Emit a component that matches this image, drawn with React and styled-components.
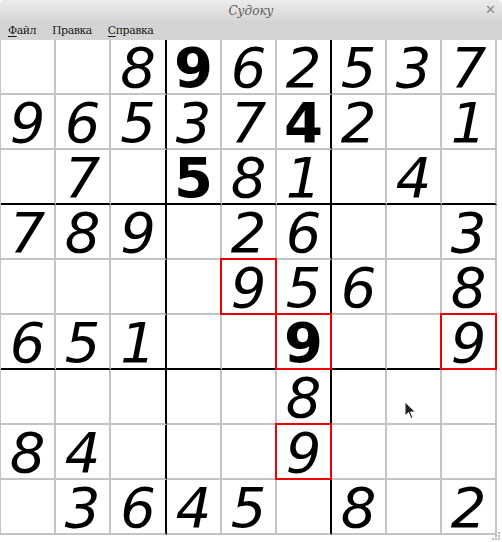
import React from "react"
import styled, { createGlobalStyle } from "styled-components"

const board = [
  ["", "", "8", "9!", "6", "2", "5", "3", "7"],
  ["9", "6", "5", "3", "7", "4!", "2", "", "1"],
  ["", "7", "", "5!", "8", "1", "", "4", ""],
  ["7", "8", "9", "", "2", "6", "", "", "3"],
  ["", "", "", "", "9", "5", "6", "", "8"],
  ["6", "5", "1", "", "", "9!", "", "", "9"],
  ["", "", "", "", "", "8", "", "", ""],
  ["8", "4", "", "", "", "9", "", "", ""],
  ["", "3", "6", "4", "5", "", "8", "", "2"],
]

const conflicts = ["4-4", "5-5", "5-8", "7-5"]

const Global = createGlobalStyle`
  html, body { margin: 0; padding: 0; background: #ffffff; }
  body { width: 502px; height: 542px; overflow: hidden; }
`

const Window = styled.div`
  width: 502px;
  height: 542px;
  display: flex;
  flex-direction: column;
  background: #ffffff;
  position: relative;
`

const TitleBar = styled.div`
  height: 21px;
  display: flex;
  align-items: center;
  justify-content: center;
  position: relative;
  background: linear-gradient(#ececec, #d6d6d6);
  border-top-left-radius: 4px;
  border-top-right-radius: 4px;
  font-family: "DejaVu Serif", "Liberation Serif", serif;
  font-style: italic;
  font-size: 12px;
  color: #5a5a5a;
`

const Close = styled.span`
  position: absolute;
  right: 6px;
  top: 2px;
  font-family: "DejaVu Sans", sans-serif;
  font-style: normal;
  font-weight: bold;
  font-size: 13px;
  color: #8a8a8a;
`

const MenuBar = styled.div`
  height: 19px;
  display: flex;
  align-items: center;
  padding-left: 8px;
  background: #d4d4d4;
  font-family: "DejaVu Serif", "Liberation Serif", serif;
  font-size: 11px;
  letter-spacing: -0.5px;
  color: #1a1a1a;
`

const MenuItem = styled.span`
  margin-right: 16px;
  u { text-decoration: underline; text-underline-offset: 2px; }
`

const Grid = styled.div`
  display: grid;
  grid-template-columns: 55px 55px 56px 55px 55px 55px 55px 55px 55px;
  grid-template-rows: repeat(9, 55px);
  width: 497px;
  border-left: 1px solid #c4c4c4;
  box-sizing: border-box;
`

const Cell = styled.div`
  position: relative;
  box-sizing: border-box;
  border-right: ${p => (p.$thickR ? "2px solid #000" : "2px solid #c4c4c4")};
  border-bottom: ${p => (p.$thickB ? "2px solid #000" : "2px solid #c4c4c4")};
  display: flex;
  align-items: flex-end;
  justify-content: center;
  font-family: "DejaVu Sans", "Noto Sans", sans-serif;
  font-size: 56px;
  line-height: 50px;
  font-style: ${p => (p.$given ? "normal" : "italic")};
  font-weight: ${p => (p.$given ? "bold" : "normal")};
  color: #000;
  &::after {
    content: "";
    display: ${p => (p.$conflict ? "block" : "none")};
    position: absolute;
    left: -2px;
    top: -2px;
    right: -2px;
    bottom: -2px;
    border: 2px solid #ee0000;
  }
`

const Cursor = styled.svg`
  position: absolute;
  left: 404px;
  top: 401px;
`

const Grip = styled.svg`
  position: absolute;
  right: 1px;
  bottom: 1px;
`

export default function App() {
  return (
    <Window>
      <Global />
      <TitleBar>
        Судоку
        <Close>✕</Close>
      </TitleBar>
      <MenuBar>
        <MenuItem><u>Ф</u>айл</MenuItem>
        <MenuItem>Правка</MenuItem>
        <MenuItem><u>С</u>правка</MenuItem>
      </MenuBar>
      <Grid>
        {board.map((row, r) =>
          row.map((v, c) => (
            <Cell
              key={r + "-" + c}
              $thickR={c === 2 || c === 5}
              $thickB={r === 2 || r === 5}
              $given={v.endsWith("!")}
              $conflict={conflicts.includes(r + "-" + c)}
            >
              {v.replace("!", "")}
            </Cell>
          ))
        )}
      </Grid>
      <Cursor width="14" height="20" viewBox="0 0 14 20">
        <path d="M1 1 L1 15 L4.5 11.5 L7 17.5 L9 16.7 L6.6 11 L11.5 11 Z" fill="#222" stroke="#fff" strokeWidth="1" />
      </Cursor>
      <Grip width="10" height="10" viewBox="0 0 10 10">
        <g fill="#b8b8b8">
          <rect x="7" y="1" width="2" height="2" />
          <rect x="4" y="4" width="2" height="2" />
          <rect x="7" y="4" width="2" height="2" />
          <rect x="1" y="7" width="2" height="2" />
          <rect x="4" y="7" width="2" height="2" />
          <rect x="7" y="7" width="2" height="2" />
        </g>
      </Grip>
    </Window>
  )
}
